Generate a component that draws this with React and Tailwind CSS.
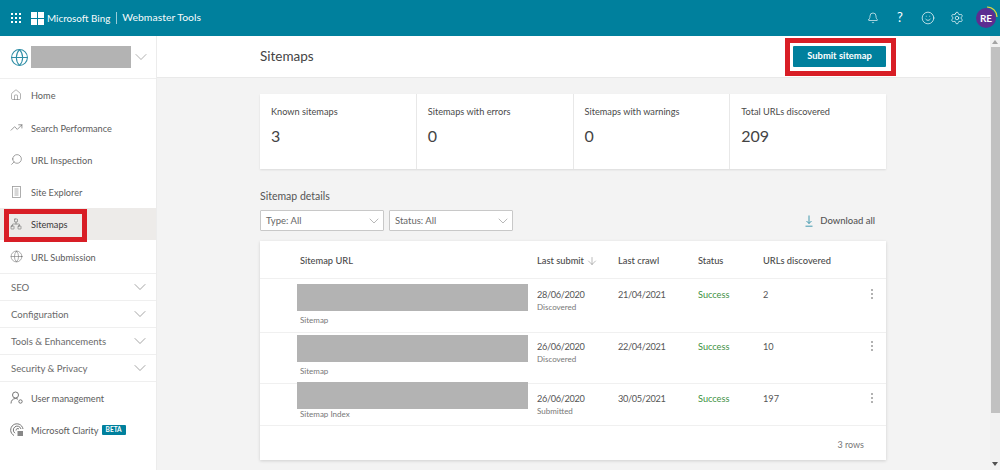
import { Bell, ChevronDown, Globe, House, Network, Search, Settings, Smile, TrendingUp, ArrowDown } from "lucide-react";

const font = { fontFamily: 'Lato, "Open Sans", sans-serif' };

function SiteExplorerIcon() {
  return (
    <svg width="14" height="14" viewBox="0 0 14 14" fill="none" stroke="#999" strokeWidth="0.8">
      <rect x="2.5" y="1.5" width="8" height="11" />
      <path d="M4.5 4h4M4.5 6h4M4.5 8h4M4.5 10h4" />
    </svg>
  );
}

function UserMgmtIcon() {
  return (
    <svg width="14" height="14" viewBox="0 0 14 14" fill="none" stroke="#666" strokeWidth="0.9">
      <circle cx="5.5" cy="4" r="3" />
      <path d="M1 12.5c0-3 2-5 4.5-5 1 0 1.8.3 2.5.8" />
      <circle cx="10.5" cy="10.5" r="1.7" />
    </svg>
  );
}

function ClarityIcon() {
  return (
    <svg width="14" height="14" viewBox="0 0 14 14" fill="none" stroke="#666" strokeWidth="0.9">
      <path d="M4 12.5A6.2 6.2 0 1 1 13 6" />
      <path d="M5 10.2A3.9 3.9 0 1 1 11 6" />
      <path d="M6 7.5A1.8 1.8 0 0 1 9 6" />
      <rect x="7.5" y="8" width="5.5" height="5" fill="#888" stroke="none" />
    </svg>
  );
}

function NavItem({ icon, label, active, children }) {
  return (
    <div className={`flex h-[32.3px] items-center pl-[10px] ${active ? "bg-[#edebe9]" : ""}`}>
      <span className="flex w-[21px] shrink-0 items-center">{icon}</span>
      <span className={`pt-[2px] text-[9.2px] ${active ? "text-[#3a3a3a]" : "text-[#5c5c5c]"}`}>{label}</span>
      {children}
    </div>
  );
}

function NavGroup({ label }) {
  return (
    <div className="flex h-[27px] items-center justify-between border-b border-[#efefef] pl-[11px] pr-[6px]">
      <span className="pt-[2px] text-[9.6px] text-[#6a6a6a]">{label}</span>
      <ChevronDown size={20} strokeWidth={0.8} color="#777" />
    </div>
  );
}

function StatCard({ label, value, last }) {
  return (
    <div className={`flex-1 pl-[11px] pt-[11px] ${last ? "" : "border-r border-[#e8e8e8]"}`}>
      <div className="text-[9.2px] leading-[13px] text-[#4a4a4a]">{label}</div>
      <div className="mt-[7px] text-[16px] leading-[22px] text-[#444]">{value}</div>
    </div>
  );
}

function FilterSelect({ label }) {
  return (
    <div className="flex h-[21px] w-[124px] items-center justify-between rounded-[1px] border border-[#c8c8c8] bg-white pl-[5px] pr-[1px]">
      <span className="pt-[1px] text-[9.5px] text-[#666]">{label}</span>
      <ChevronDown size={16} strokeWidth={0.9} color="#888" />
    </div>
  );
}

const colTemplate = "grid grid-cols-[240px_81px_80px_65px_108px_1fr] pl-[37px]";

const rows = [
  { h: "h-[54px]", gap: "mt-[5px]", capGap: "mt-[3px]", sub: "Sitemap", submit: "28/06/2020", how: "Discovered", crawl: "21/04/2021", urls: "2", dateTop: "pt-[9px]" },
  { h: "h-[51px]", gap: "mt-[2px]", capGap: "mt-[3px]", sub: "Sitemap", submit: "26/06/2020", how: "Discovered", crawl: "22/04/2021", urls: "10", dateTop: "pt-[7px]" },
  { h: "h-[42px]", gap: "-mt-[2px]", capGap: "-mt-[1px]", sub: "Sitemap Index", submit: "26/06/2020", how: "Submitted", crawl: "30/05/2021", urls: "197", dateTop: "pt-[8px]" },
];

function KebabDots() {
  return (
    <div className="flex flex-col items-center gap-[2px] pt-[1px]">
      <span className="h-[2px] w-[2px] rounded-full bg-[#999]" />
      <span className="h-[2px] w-[2px] rounded-full bg-[#999]" />
      <span className="h-[2px] w-[2px] rounded-full bg-[#999]" />
    </div>
  );
}

export default function App() {
  return (
    <div className="relative flex h-[470px] w-[1000px] flex-col overflow-hidden bg-white" style={font}>
      {/* Top bar */}
      <header className="flex h-[36px] shrink-0 items-center bg-[#00809d] text-white">
        <div className="ml-[11px] grid grid-cols-3 gap-[2px]">
          {[...Array(9)].map((_, i) => (
            <span key={i} className="h-[2px] w-[2px] bg-white" />
          ))}
        </div>
        <div className="ml-[10px] grid grid-cols-2 gap-[1px]">
          {[...Array(4)].map((_, i) => (
            <span key={i} className="h-[6px] w-[6px] bg-white" />
          ))}
        </div>
        <span className="ml-[3px] text-[9.8px] font-medium text-white/95">Microsoft Bing</span>
        <span className="ml-[6px] h-[12px] w-px bg-white/60" />
        <span className="ml-[5px] text-[10.4px] font-medium text-white/95">Webmaster Tools</span>
        <div className="ml-auto flex items-center">
          <Bell size={12} strokeWidth={1.3} />
          <span className="ml-[14px] w-[14px] text-center text-[13px]">?</span>
          <Smile size={14} strokeWidth={1.2} className="ml-[14px]" />
          <Settings size={14} strokeWidth={1.2} className="ml-[15px]" />
          <div className="relative ml-[12px] mr-[4px] flex h-[20px] w-[20px] items-center justify-center rounded-full bg-[#5c2d91] text-[10px] font-bold">
            RE
            <svg className="absolute -right-[2px] -top-[2px]" width="12" height="12" viewBox="0 0 12 12" fill="none">
              <path d="M1 1a10 10 0 0 1 10 10" stroke="#e6d33c" strokeWidth="1.2" />
            </svg>
          </div>
        </div>
      </header>

      <div className="flex min-h-0 flex-1">
        {/* Sidebar */}
        <aside className="w-[157px] shrink-0 border-r border-[#ececec] bg-white">
          <div className="flex h-[43px] items-center border-b border-[#efefef] pl-[10px]">
            <Globe size={19} strokeWidth={1.3} color="#2f8ea6" />
            <div className="ml-[2px] h-[22px] w-[100px] bg-[#b3b3b3]" />
            <ChevronDown size={20} strokeWidth={0.8} color="#888" />
          </div>
          <NavItem icon={<House size={12} strokeWidth={1} color="#666" />} label="Home" />
          <NavItem icon={<TrendingUp size={13} strokeWidth={1.1} color="#555" />} label="Search Performance" />
          <NavItem icon={<Search size={13} strokeWidth={1.1} color="#666" className="-scale-x-100" />} label="URL Inspection" />
          <NavItem icon={<SiteExplorerIcon />} label="Site Explorer" />
          <NavItem icon={<Network size={12} strokeWidth={1} color="#555" />} label="Sitemaps" active />
          <NavItem icon={<Globe size={13} strokeWidth={1} color="#666" />} label="URL Submission" />
          <div className="border-t border-[#efefef]">
            <NavGroup label="SEO" />
            <NavGroup label="Configuration" />
            <NavGroup label="Tools & Enhancements" />
            <NavGroup label="Security & Privacy" />
          </div>
          <NavItem icon={<UserMgmtIcon />} label="User management" />
          <NavItem
            icon={<ClarityIcon />}
            label="Microsoft Clarity"
            children={
              <span className="ml-[3px] rounded-[1px] bg-[#00809d] px-[4px] text-[6.5px] font-bold leading-[10px] text-white">BETA</span>
            }
          />
        </aside>

        {/* Main column */}
        <main className="flex min-w-0 flex-1 flex-col bg-[#f3f3f3]">
          <div className="flex h-[42px] shrink-0 items-center justify-between border-b border-[#e9e9e9] bg-white pl-[103px] pr-[104px]">
            <h1 className="text-[13.5px] text-[#444]">Sitemaps</h1>
            <button className="flex h-[21px] w-[93px] items-center justify-center rounded-[1px] bg-[#00809d] text-[9.4px] font-bold text-white">
              Submit sitemap
            </button>
          </div>

          <div className="flex flex-col pl-[103px] pr-[104px]">
            <section className="mt-[16px] flex h-[75px] bg-white shadow-[0_1px_2px_rgba(0,0,0,0.1)]">
              <StatCard label="Known sitemaps" value="3" />
              <StatCard label="Sitemaps with errors" value="0" />
              <StatCard label="Sitemaps with warnings" value="0" />
              <StatCard label="Total URLs discovered" value="209" last />
            </section>

            <h2 className="mt-[19px] text-[10.5px] leading-[16px] text-[#555]">Sitemap details</h2>

            <div className="mt-[6px] flex h-[21px] items-center gap-[5px]">
              <FilterSelect label="Type: All" />
              <FilterSelect label="Status: All" />
              <div className="ml-auto flex items-center pr-[11px] pt-[1px] text-[9.5px] font-medium text-[#555]">
                <svg width="8" height="12" viewBox="0 0 8 12" fill="none" stroke="#2f8ea6" strokeWidth="0.9" className="mr-[7px]">
                  <path d="M4 0.5v8M1.5 6l2.5 2.5L6.5 6M0.5 11.2h7" />
                </svg>
                Download all
              </div>
            </div>

            <section className="mt-[10px] h-[219px] bg-white shadow-[0_1px_3px_rgba(0,0,0,0.15)]">
              <div className={`${colTemplate} h-[38px] items-center border-b border-[#f0f0f0] pt-[2px] text-[9.3px] font-medium text-[#4a4a4a]`}>
                <span className="pl-[3px]">Sitemap URL</span>
                <span className="flex items-center gap-[2px]">
                  Last submit
                  <ArrowDown size={12} strokeWidth={1} color="#777" />
                </span>
                <span>Last crawl</span>
                <span>Status</span>
                <span>URLs discovered</span>
                <span />
              </div>

              {rows.map((row) => (
                <div key={row.submit + row.crawl} className={`${colTemplate} ${row.h} border-b border-[#f0f0f0]`}>
                  <div>
                    <div className={`${row.gap} h-[27px] w-[231px] bg-[#b3b3b3]`} />
                    <div className={`${row.capGap} pl-[3px] text-[8px] leading-[12px] text-[#777]`}>{row.sub}</div>
                  </div>
                  <div className={row.dateTop}>
                    <div className="text-[9.2px] leading-[13px] tracking-[-0.35px] text-[#555]">{row.submit}</div>
                    <div className="text-[8px] leading-[12px] text-[#777]">{row.how}</div>
                  </div>
                  <div className={`${row.dateTop} text-[9.2px] leading-[13px] tracking-[-0.35px] text-[#555]`}>{row.crawl}</div>
                  <div className={`${row.dateTop} text-[9.2px] leading-[13px] text-[#3c9142]`}>Success</div>
                  <div className={`${row.dateTop} text-[9.2px] leading-[13px] text-[#555]`}>{row.urls}</div>
                  <div className={`${row.dateTop} flex items-start`}>
                    <KebabDots />
                  </div>
                </div>
              ))}

              <div className="pr-[22px] pt-[12px] text-right text-[9px] text-[#777]">3 rows</div>
            </section>
          </div>
        </main>

        {/* Scrollbar */}
        <div className="flex w-[10px] shrink-0 flex-col items-center bg-[#f1f1f1]">
          <span className="mt-[4px] h-0 w-0 border-x-[3px] border-b-[4px] border-x-transparent border-b-[#a3a3a3]" />
          <div className="mt-[3px] h-[366px] w-[9px] bg-[#c1c1c1]" />
          <span className="mt-auto mb-[4px] h-0 w-0 border-x-[3px] border-t-[4px] border-x-transparent border-t-[#505050]" />
        </div>
      </div>

      {/* Red annotation boxes drawn over the screenshot */}
      <div className="pointer-events-none absolute left-[4px] top-[209px] h-[33px] w-[83px] border-[5px] border-[#d81e26]" />
      <div className="pointer-events-none absolute left-[785px] top-[38px] h-[38px] w-[111px] border-[5px] border-[#d81e26]" />
    </div>
  );
}
